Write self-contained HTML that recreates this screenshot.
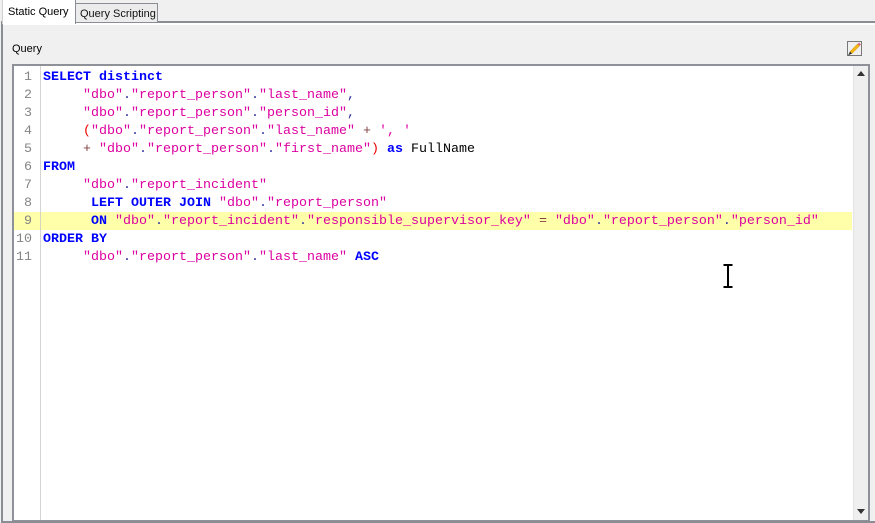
<!DOCTYPE html>
<html><head><meta charset="utf-8"><style>
html,body{margin:0;padding:0;width:875px;height:523px;overflow:hidden;background:#f0f0f0}
div{position:absolute;box-sizing:border-box}
.t{font:11px/14px "Liberation Sans",sans-serif;color:#000;white-space:nowrap}
.ln{left:14px;width:18px;text-align:right;font:13.33px/18px "Liberation Mono",monospace;color:#858585;height:18px}
.c{left:43px;font:13.33px/18px "Liberation Mono",monospace;white-space:pre;height:18px;color:#000}
.k{color:#0000ff;font-weight:bold}
.s{color:#dc00a0}
.d{color:#30309c}
.o{color:#804040}
.p{color:#ee0000}
</style></head><body>
<div style="left:0;top:0;width:875px;height:21px;background:#f0f0f0"></div>
<div style="left:1px;top:21px;width:874px;height:2px;background:#8b8d94"></div>
<div style="left:3px;top:23px;width:872px;height:2px;background:#fff"></div>
<div style="left:1px;top:21px;width:2px;height:502px;background:#8b8d94"></div>
<div style="left:1px;top:521px;width:874px;height:2px;background:#8b8d94"></div>
<!-- tabs -->
<div style="left:75px;top:3px;width:83px;height:19px;background:#ececec;border:1px solid #8b8d94;border-bottom:none"></div>
<div class="t" style="left:80px;top:7px;color:#111">Query Scripting</div>
<div style="left:2px;top:0;width:74px;height:24px;background:#fff;border-right:1px solid #8b8d94;border-left:1px solid #d0d0d0"></div>
<div class="t" style="left:8px;top:5px">Static Query</div>
<div class="t" style="left:12px;top:42px">Query</div>
<!-- pencil -->
<svg style="position:absolute;left:846px;top:40px" width="17" height="17" viewBox="0 0 17 17">
<rect x="1.500" y="1.500" width="14" height="14" fill="none" stroke="#000" stroke-width="1" stroke-dasharray="1 1" shape-rendering="crispEdges"/>
<path d="M4 11.500 L11.500 4 L13.500 6 L6 13.500 Z" fill="#f4b818" stroke="#d09010" stroke-width=".5"/>
<path d="M11.500 4 L13 2.500 L15 4.500 L13.500 6 Z" fill="#d86a80"/>
<path d="M4 11.500 L6 13.500 L2 15.500 Z" fill="#303030"/>
</svg>
<!-- editor -->
<div style="left:12px;top:64px;width:858px;height:457px;background:#fff;border:2px solid #8f9198;border-bottom-width:1px"></div>
<div style="left:40px;top:66px;width:1px;height:454px;background:#d4d4d4"></div>
<div style="left:14px;top:212px;width:838px;height:18px;background:#ffffaa"></div>
<div style="left:40px;top:212px;width:1px;height:18px;background:#d4d4c0"></div>
<!-- scrollbar -->
<div style="left:853px;top:66px;width:15px;height:454px;background:#efefef;border-left:1px solid #e4e4e4"></div>
<svg style="position:absolute;left:857px;top:71px" width="9" height="6"><path d="M4 0 L8 5 L0 5 Z" fill="#333"/></svg>
<svg style="position:absolute;left:857px;top:509px" width="9" height="6"><path d="M0 0 L8 0 L4 5 Z" fill="#333"/></svg>
<!-- numbers -->
<div class="ln" style="top:69px">1</div>
<div class="ln" style="top:87px">2</div>
<div class="ln" style="top:105px">3</div>
<div class="ln" style="top:123px">4</div>
<div class="ln" style="top:141px">5</div>
<div class="ln" style="top:159px">6</div>
<div class="ln" style="top:177px">7</div>
<div class="ln" style="top:195px">8</div>
<div class="ln" style="top:213px">9</div>
<div class="ln" style="top:231px">10</div>
<div class="ln" style="top:249px">11</div>
<!-- code -->
<div class="c" style="top:69px"><span class="k">SELECT distinct</span></div>
<div class="c" style="top:87px">     <span class="s">"dbo"</span><span class="d">.</span><span class="s">"report_person"</span><span class="d">.</span><span class="s">"last_name"</span><span class="d">,</span></div>
<div class="c" style="top:105px">     <span class="s">"dbo"</span><span class="d">.</span><span class="s">"report_person"</span><span class="d">.</span><span class="s">"person_id"</span><span class="d">,</span></div>
<div class="c" style="top:123px">     <span class="p">(</span><span class="s">"dbo"</span><span class="d">.</span><span class="s">"report_person"</span><span class="d">.</span><span class="s">"last_name"</span> <span class="o">+</span> <span class="s">', '</span></div>
<div class="c" style="top:141px">     <span class="o">+</span> <span class="s">"dbo"</span><span class="d">.</span><span class="s">"report_person"</span><span class="d">.</span><span class="s">"first_name"</span><span class="p">)</span> <span class="k">as</span> FullName</div>
<div class="c" style="top:159px"><span class="k">FROM</span></div>
<div class="c" style="top:177px">     <span class="s">"dbo"</span><span class="d">.</span><span class="s">"report_incident"</span></div>
<div class="c" style="top:195px">      <span class="k">LEFT OUTER JOIN</span> <span class="s">"dbo"</span><span class="d">.</span><span class="s">"report_person"</span></div>
<div class="c" style="top:213px">      <span class="k">ON</span> <span class="s">"dbo"</span><span class="d">.</span><span class="s">"report_incident"</span><span class="d">.</span><span class="s">"responsible_supervisor_key"</span> <span class="o">=</span> <span class="s">"dbo"</span><span class="d">.</span><span class="s">"report_person"</span><span class="d">.</span><span class="s">"person_id"</span></div>
<div class="c" style="top:231px"><span class="k">ORDER BY</span></div>
<div class="c" style="top:249px">     <span class="s">"dbo"</span><span class="d">.</span><span class="s">"report_person"</span><span class="d">.</span><span class="s">"last_name"</span> <span class="k">ASC</span></div>
<!-- I-beam cursor -->
<svg style="position:absolute;left:723px;top:264px" width="12" height="25" viewBox="0 0 12 25">
<path d="M0.500 1 H9.500 M5 1.500 V22.500 M0.500 23 H9.500" fill="none" stroke="#000" stroke-width="2"/>
</svg>
</body></html>
